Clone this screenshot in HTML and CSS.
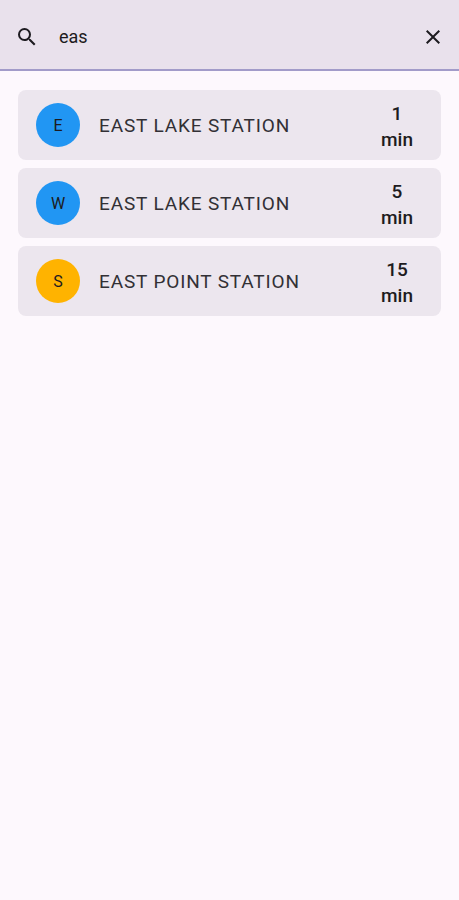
FILE: index.html
```html
<!DOCTYPE html>
<html>
<head>
<meta charset="utf-8">
<link rel="stylesheet" href="styles.css">
</head>
<body>
<div class="search">
  <svg class="ico-search" viewBox="0 0 24 24" width="24" height="24"><path d="M15.5 14h-.79l-.28-.27A6.47 6.47 0 0 0 16 9.5 6.5 6.5 0 1 0 9.5 16c1.61 0 3.09-.59 4.23-1.57l.27.28v.79l5 4.99L20.49 19l-4.99-5zm-6 0C7.01 14 5 11.990 5 9.5S7.01 5 9.5 5 14 7.01 14 9.5 11.99 14 9.5 14z" fill="#1d1b20"/></svg>
  <span class="query">eas</span>
  <svg class="ico-close" viewBox="0 0 24 24" width="24" height="24"><path d="M19 6.41 17.59 5 12 10.59 6.41 5 5 6.41 10.59 12 5 17.59 6.41 19 12 13.41 17.59 19 19 17.59 13.41 12z" fill="#1d1b20"/></svg>
</div>
<div class="divider"></div>
<div class="list">
  <div class="card">
    <div class="badge blue">E</div>
    <div class="name">EAST LAKE STATION</div>
    <div class="time">1<br>min</div>
  </div>
  <div class="card">
    <div class="badge blue">W</div>
    <div class="name">EAST LAKE STATION</div>
    <div class="time">5<br>min</div>
  </div>
  <div class="card">
    <div class="badge amber">S</div>
    <div class="name">EAST POINT STATION</div>
    <div class="time">15<br>min</div>
  </div>
</div>
</body>
</html>
```

FILE: styles.css
```css
html, body {
  margin: 0;
  padding: 0;
  background: #fdf8fd;
  font-family: Roboto, "Noto Sans", sans-serif;
  color: #1d1b20;
}
.search {
  height: 69px;
  background: #e9e1ec;
  display: flex;
  align-items: center;
  padding: 5px 14px 0 15px;
  box-sizing: border-box;
}
.ico-search { flex: none; }
.query {
  margin-left: 20px;
  font-size: 18px;
  flex: 1;
  padding-bottom: 2px;
}
.ico-close { flex: none; }
.divider {
  height: 2px;
  background: #a29bc9;
}
.list {
  padding: 19px 18px 0 18px;
  display: flex;
  flex-direction: column;
  gap: 8px;
}
.card {
  height: 70px;
  background: #ece6ee;
  border-radius: 8px;
  display: flex;
  align-items: center;
  padding: 0 20px 0 18px;
  box-sizing: border-box;
}
.badge {
  width: 44px;
  height: 44px;
  border-radius: 50%;
  display: flex;
  align-items: center;
  justify-content: center;
  font-size: 16px;
  color: #1d1b20;
  flex: none;
}
.blue { background: #2196f3; }
.amber { background: #ffb300; }
.name {
  margin-left: 19px;
  font-size: 19px;
  letter-spacing: 0.85px;
  flex: 1;
  color: #323035;
}
.time {
  width: 48px;
  text-align: center;
  font-size: 19px;
  font-weight: 500;
  line-height: 26px;
  padding-top: 3px;
  color: #1d1b20;
}
```
